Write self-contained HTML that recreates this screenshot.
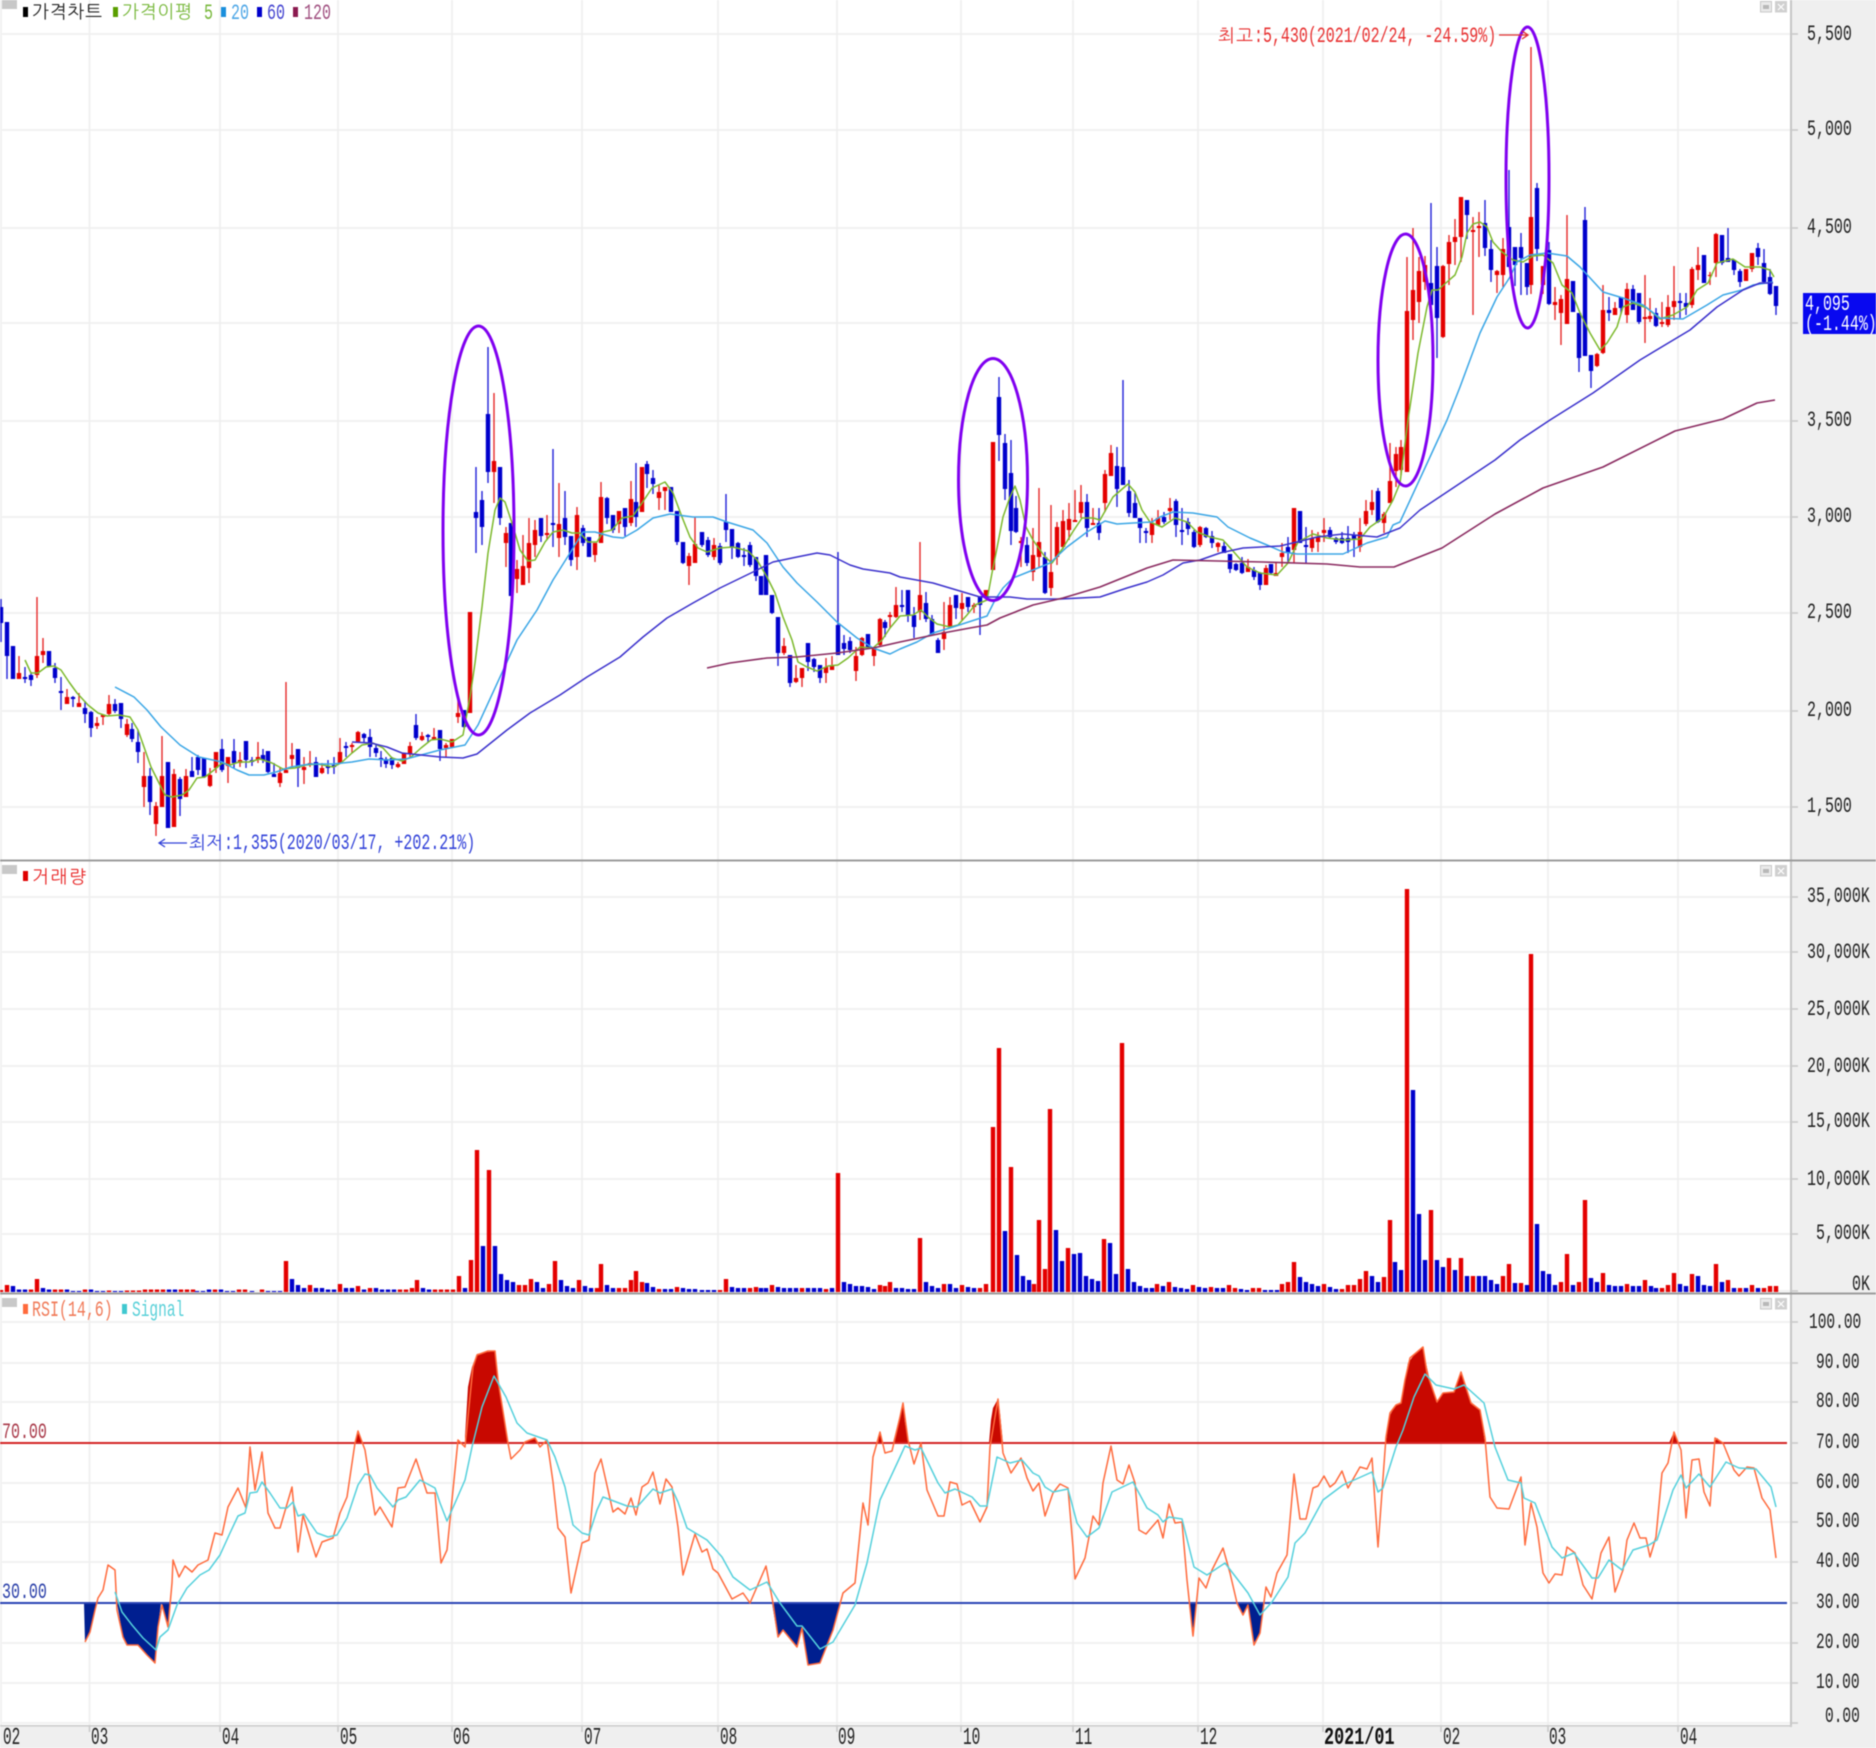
<!DOCTYPE html>
<html lang="ko"><head><meta charset="utf-8"><title>차트</title>
<style>
html,body{margin:0;padding:0;background:#fff;width:1876px;height:1748px;overflow:hidden}
svg{display:block;filter:blur(.45px)}
.ax{font-family:"Liberation Mono",monospace;font-size:22px;fill:#222}
.ko{font-family:"NanumGothic","Noto Sans CJK KR","Liberation Sans",sans-serif;font-size:18px}
.t{font-family:"Liberation Mono",monospace;font-size:24px;fill:#222}
.ln{fill:none;stroke-linejoin:round}
</style></head><body>
<svg width="1876" height="1748" viewBox="0 0 1876 1748" xmlns="http://www.w3.org/2000/svg">
<rect width="1876" height="1748" fill="#fff"/>
<rect x="1792" y="0" width="84" height="1748" fill="#efefef"/>
<rect x="0" y="1725" width="1792" height="23" fill="#efefef"/>
<!-- grid -->
<path fill="none" stroke="#eeeeee" stroke-width="1.5" d="M2 34H1790M2 130H1790M2 228H1790M2 323H1790M2 421H1790M2 517H1790M2 613H1790M2 711H1790M2 807H1790M2 897H1790M2 952H1790M2 1009H1790M2 1066H1790M2 1122H1790M2 1179H1790M2 1234H1790M2 1291H1790M2 1322H1790M2 1363H1790M2 1402H1790M2 1483H1790M2 1522H1790M2 1562H1790M2 1643H1790M2 1683H1790M2 1723H1790M89.5 0V1725M220 0V1725M338 0V1725M452 0V1725M582 0V1725M718 0V1725M837 0V1725M961 0V1725M1073 0V1725M1198 0V1725M1323 0V1725M1441 0V1725M1548 0V1725M1678 0V1725M1 0V1725"/>
<path fill="none" stroke="#c8c8c8" stroke-width="1.5" d="M1792 34h6M1792 130h6M1792 228h6M1792 323h6M1792 421h6M1792 517h6M1792 613h6M1792 711h6M1792 807h6M1792 897h6M1792 952h6M1792 1009h6M1792 1066h6M1792 1122h6M1792 1179h6M1792 1234h6M1792 1291h6M1792 1322h6M1792 1363h6M1792 1402h6M1792 1443h6M1792 1483h6M1792 1522h6M1792 1562h6M1792 1603h6M1792 1643h6M1792 1683h6M1792 1723h6M89.5 1725v7M220 1725v7M338 1725v7M452 1725v7M582 1725v7M718 1725v7M837 1725v7M961 1725v7M1073 1725v7M1198 1725v7M1323 1725v7M1441 1725v7M1548 1725v7M1678 1725v7"/>
<rect x="1790" y="0" width="2" height="1727" fill="#c6c6c6"/>
<rect x="0" y="1725" width="1792" height="1.6" fill="#cccccc"/>

<!-- red wicks -->
<path fill="none" stroke="#e62a2a" stroke-width="1.4" d="M19 656V679M37 597V678M43 638V663M67 689V704M79 693V707M97 717V729M103 715V725M109 695V715M127 719V737M144 752V807M156 802V836M162 736V807M174 769V827M186 769V797M210 768V787M216 752V773M228 757V783M240 752V767M258 742V763M280 768V787M286 682V773M292 743V768M304 757V784M310 751V767M322 763V774M340 738V764M352 743V753M358 731V743M398 762V768M404 753V764M410 742V757M422 732V741M434 728V740M446 743V758M452 739V748M458 700V723M470 612V713M494 393V503M506 527V567M517 560V593M523 535V585M529 518V583M535 520V557M547 515V540M559 483V557M577 507V570M595 543V562M601 482V543M619 511V533M631 481V526M642 467V512M659 485V510M665 487V510M689 553V585M695 517V563M714 538V560M784 638V655M796 665V683M802 668V687M826 658V683M832 656V670M856 647V681M862 637V656M874 647V666M880 618V647M890 612V628M896 587V618M920 542V620M944 602V650M950 597V628M962 593V620M974 603V613M986 590V598M993 442V570M1021 537V567M1033 528V581M1039 488V568M1051 505V596M1057 522V565M1063 510V549M1069 503V540M1075 490V522M1081 485V518M1093 508V525M1105 470V512M1111 445V476M1152 518V543M1158 510V525M1170 498V520M1200 526V547M1218 542V552M1248 559V572M1266 565V585M1276 563V576M1282 543V567M1294 508V563M1312 530V552M1318 532V552M1324 518V542M1360 518V552M1366 500V526M1372 490V515M1384 512V533M1390 443V503M1396 447V487M1401 440V475M1407 257V472M1413 228V340M1419 257V323M1425 256V290M1443 265V338M1449 235V285M1455 219V265M1461 197V262M1473 217V315M1479 212V257M1497 270V293M1503 238V287M1531 47V294M1543 266V294M1555 287V320M1561 295V345M1567 215V324M1597 353V367M1603 285V354M1615 302V315M1627 283V323M1645 275V343M1650 298V322M1662 302V327M1668 295V327M1674 266V320M1692 267V308M1698 247V280M1710 272V285M1716 233V277M1746 269V281M1752 253V272"/>
<!-- red bodies -->
<path fill="none" stroke="#e40000" stroke-width="4.4" d="M19 673V679M37 656V675M43 651V655M67 697V704M79 703V707M97 723V726M103 715V717M109 704V714M127 724V735M144 776V787M156 806V824M162 776V807M174 774V827M186 776V797M210 775V786M216 752V768M228 757V766M240 760V763M258 757V760M280 773V783M286 770V773M292 755V759M304 767V770M310 763V765M322 768V773M340 752V763M352 745V747M358 732V742M398 764V767M404 753V764M410 746V754M422 736V740M434 737V739M446 745V748M452 739V747M458 713V717M470 612V713M494 461V472M506 533V543M517 569V579M523 566V585M529 543V568M535 530V545M547 533V535M559 524V538M577 515V557M595 543V555M601 497V543M619 511V524M631 499V523M642 467V512M659 492V498M665 487V491M689 556V566M695 544V563M714 545V557M784 646V653M796 678V682M802 668V678M826 667V673M832 665V670M856 656V671M862 638V655M874 648V656M880 619V645M890 615V617M896 605V617M920 595V612M944 632V639M950 605V627M962 603V609M974 605V607M986 590V598M993 442V570M1021 541V543M1033 555V572M1039 542V557M1051 572V588M1057 527V557M1063 521V547M1069 519V530M1075 520V522M1081 502V513M1093 523V525M1105 474V503M1111 453V476M1152 523V535M1158 518V525M1170 508V511M1200 527V545M1218 543V547M1248 567V572M1266 568V585M1276 573V576M1282 553V557M1294 508V550M1312 538V548M1318 537V542M1324 530V533M1360 532V547M1366 511V524M1372 502V510M1384 514V523M1390 481V503M1396 454V471M1401 447V470M1407 311V472M1413 290V320M1419 271V302M1425 265V282M1443 266V337M1449 242V264M1455 237V242M1461 197V237M1473 230V232M1479 226V228M1497 271V275M1503 249V275M1531 217V285M1543 266V285M1555 302V305M1561 299V313M1567 279V324M1597 354V366M1603 310V353M1615 308V315M1627 289V315M1645 317V319M1650 316V319M1662 322V324M1668 307V325M1674 301V307M1692 269V305M1698 265V270M1710 275V276M1716 234V263M1746 269V281M1752 253V269"/>
<!-- blue wicks -->
<path fill="none" stroke="#2020d8" stroke-width="1.4" d="M1 599V642M7 622V679M13 646V679M25 667V683M31 672V686M49 651V667M55 663V683M61 677V710M73 696V707M85 701V723M91 711V737M115 699V713M121 703V728M132 723V742M138 730V763M150 768V815M168 762V828M180 777V816M192 757V777M198 755V775M204 758V778M222 739V772M234 739V768M246 741V768M252 757V766M263 749V763M268 751V773M274 763V777M298 749V787M316 757V777M328 760V774M334 757V774M346 742V757M364 733V743M370 729V757M376 745V757M381 751V767M386 757V768M392 757V769M416 714V740M428 734V742M440 730V761M464 710V728M476 467V553M482 491V545M488 347V483M500 467V525M511 523V596M541 518V542M553 449V547M565 491V545M571 536V566M583 525V546M589 537V557M607 497V524M613 515V533M625 508V536M636 463V527M647 461V488M653 470V494M671 487V512M677 511V545M683 542V564M702 532V547M708 537V557M720 543V565M726 494V542M732 529V559M738 542V558M744 548V566M750 542V567M756 557V581M761 576V595M766 555V595M772 595V614M778 617V666M790 655V687M808 643V671M814 658V672M820 665V683M838 552V655M844 635V655M850 637V653M868 634V648M885 620V637M902 590V612M908 590V622M914 607V638M926 592V622M932 615V635M938 638V653M956 595V619M968 597V612M980 596V635M999 377V461M1005 434V500M1011 440V545M1016 496V533M1027 537V566M1045 552V594M1087 494V537M1099 508V540M1117 447V507M1123 380V485M1129 480V517M1135 493V518M1140 518V543M1146 528V543M1164 512V524M1176 499V537M1182 508V545M1188 518V535M1194 530V548M1206 527V538M1212 531V548M1224 542V553M1230 554V573M1236 563V571M1242 557V574M1254 567V580M1260 572V590M1271 564V575M1288 537V563M1300 511V543M1306 527V563M1330 527V538M1336 537V544M1342 532V544M1348 526V553M1354 532V557M1378 488V523M1431 203V305M1437 247V358M1467 200V239M1485 200V256M1491 240V282M1509 170V267M1515 247V286M1521 233V295M1527 263V295M1537 183V261M1549 242V305M1573 281V312M1579 313V372M1585 207V356M1591 355V388M1609 297V321M1621 297V314M1633 285V310M1639 293V324M1656 308V327M1680 293V318M1686 293V315M1704 255V283M1722 235V265M1728 228V262M1734 260V275M1740 269V287M1758 243V265M1764 249V283M1770 269V295M1776 286V315"/>
<!-- blue bodies -->
<path fill="none" stroke="#0000cc" stroke-width="4.4" d="M1 607V623M7 622V656M13 646V679M25 677V679M31 675V680M49 651V666M55 668V678M61 691V693M73 697V699M85 708V714M91 712V728M115 704V711M121 703V719M132 729V739M138 742V752M150 776V802M168 762V828M180 779V799M192 771V777M198 757V770M204 758V777M222 749V770M234 751V763M246 741V760M252 760V762M263 755V760M268 751V772M274 774V777M298 749V768M316 762V777M328 766V768M334 765V767M346 746V748M364 734V738M370 737V747M376 748V753M381 758V760M386 759V764M392 758V765M416 725V738M428 735V737M440 730V749M464 710V727M476 512V518M482 500V527M488 414V472M500 467V518M511 523V596M541 518V536M553 523V525M565 518V537M571 536V560M583 528V543M589 537V557M607 498V518M613 515V530M625 508V527M636 502V517M647 464V474M653 478V484M671 487V512M677 511V542M683 542V563M702 532V545M708 540V555M720 546V563M726 522V530M732 529V548M738 543V557M744 555V557M750 545V565M756 557V576M761 576V595M766 555V595M772 595V613M778 617V653M790 655V683M808 643V662M814 659V667M820 665V678M838 625V655M844 643V649M850 641V650M868 634V648M885 622V628M902 605V607M908 590V615M914 615V627M926 603V619M932 619V634M938 640V653M956 595V608M968 597V607M980 596V605M999 397V435M1005 443V489M1011 473V531M1016 508V532M1027 545V563M1045 557V593M1087 502V528M1099 523V533M1117 466V489M1123 467V485M1129 491V513M1135 503V518M1140 518V528M1146 531V533M1164 517V522M1176 501V525M1182 530V532M1188 522V529M1194 532V547M1206 528V537M1212 536V543M1224 546V553M1230 554V569M1236 564V570M1242 563V573M1254 570V577M1260 573V585M1271 564V573M1288 547V553M1300 511V543M1306 545V547M1330 530V537M1336 538V542M1342 538V543M1348 538V542M1354 535V540M1378 491V522M1431 283V305M1437 266V318M1467 200V215M1485 223V248M1491 249V270M1509 227V267M1515 247V265M1521 247V258M1527 263V287M1537 188V249M1549 250V304M1573 281V312M1579 313V358M1585 220V356M1591 355V371M1609 310V313M1621 297V308M1633 289V310M1639 293V322M1656 313V326M1680 301V303M1686 303V307M1704 255V283M1722 235V263M1728 258V262M1734 260V270M1740 271V282M1758 248V257M1764 263V282M1770 277V294M1776 286V306"/>

<!-- moving averages -->
<polyline class="ln" stroke="#7cb92c" stroke-width="1.5" points="25,660 31,673 38,673 46,667 54,666 61,670 69,682 77,693 88,705 98,713 107,716 119,715 130,717 138,730 144,747 151,767 159,783 165,795 172,797 182,795 189,790 197,778 205,777 214,770 222,763 230,765 239,762 249,762 260,759 272,763 283,769 295,768 306,765 318,764 333,767 341,763 352,753 362,745 373,743 383,748 392,758 402,761 411,757 421,748 431,740 440,739 452,742 463,735 470,697 475,663 482,607 488,553 495,510 500,498 505,502 512,523 520,550 528,561 535,560 545,542 553,532 563,530 572,533 580,533 588,542 597,542 603,532 612,530 622,518 633,516 642,503 652,488 665,482 673,493 682,517 690,537 698,548 707,552 720,548 733,547 748,551 757,560 767,577 775,593 783,617 792,640 798,662 807,667 817,671 828,666 838,665 848,658 860,647 873,648 882,640 890,628 900,616 913,615 921,610 928,617 937,624 950,627 958,625 967,615 975,605 987,600 992,573 997,548 1003,517 1010,497 1015,486 1020,500 1026,527 1033,540 1045,557 1052,563 1063,548 1072,533 1082,518 1093,518 1100,520 1113,497 1128,484 1135,492 1142,510 1150,522 1162,527 1175,518 1187,522 1197,532 1210,537 1223,540 1233,551 1247,567 1260,573 1277,575 1288,563 1298,542 1313,534 1327,538 1343,540 1360,539 1370,527 1383,518 1393,500 1400,483 1408,420 1418,353 1427,307 1432,290 1438,290 1447,282 1455,275 1462,257 1467,233 1473,224 1480,222 1487,227 1493,242 1502,252 1513,260 1523,262 1533,256 1543,255 1553,263 1562,285 1572,293 1580,313 1590,333 1600,350 1607,343 1617,327 1623,307 1633,303 1647,308 1660,319 1673,315 1687,307 1697,290 1708,283 1717,263 1733,259 1745,267 1760,267 1770,270 1774,277"/>
<polyline class="ln" stroke="#3aa6e6" stroke-width="1.5" points="115,687 134,697 147,710 161,727 180,745 199,757 222,762 237,770 249,775 264,775 276,772 291,767 310,764 333,764 352,762 369,759 387,760 406,759 421,755 440,750 465,745 478,725 500,677 517,640 537,610 553,580 570,553 583,532 595,532 613,537 623,538 637,530 653,518 670,514 693,517 713,517 727,522 753,530 767,543 783,567 797,583 817,602 837,622 857,638 873,648 890,654 900,649 917,642 933,633 953,627 987,616 995,600 1003,588 1013,578 1033,570 1050,563 1067,547 1087,532 1105,521 1117,524 1133,523 1152,522 1160,517 1173,512 1193,513 1217,517 1228,527 1250,538 1267,545 1283,552 1297,554 1343,554 1367,543 1387,537 1393,525 1400,522 1424,470 1447,420 1460,387 1480,333 1497,297 1510,277 1517,262 1530,255 1547,253 1567,256 1580,267 1603,292 1623,298 1643,305 1660,318 1683,319 1707,305 1723,295 1742,290 1753,285 1773,282"/>
<polyline class="ln" stroke="#3a30cc" stroke-width="1.5" points="352,742 371,743 387,747 402,753 421,755 440,757 463,758 477,754 507,730 530,713 560,695 587,677 620,657 643,637 667,618 693,603 720,588 753,572 773,562 797,557 817,553 830,555 850,565 863,569 890,573 900,577 933,583 980,597 1010,597 1027,599 1060,599 1100,597 1127,588 1147,582 1163,575 1183,563 1200,560 1220,553 1243,548 1280,546 1297,542 1317,537 1343,534 1377,537 1400,528 1420,510 1450,490 1495,460 1520,440 1550,420 1593,393 1640,360 1690,330 1717,307 1743,290 1760,283 1773,283"/>
<polyline class="ln" stroke="#8a2a60" stroke-width="1.6" points="707,668 730,663 767,658 797,657 837,653 873,648 900,642 943,633 970,628 987,625 1000,618 1033,605 1063,598 1100,587 1147,568 1173,560 1263,562 1327,564 1360,567 1394,567 1442,548 1495,514 1543,488 1603,467 1675,431 1723,419 1757,403 1775,400"/>

<!-- ovals -->
<g fill="none" stroke="#8000f0" stroke-width="3">
<ellipse cx="478.5" cy="530.5" rx="35.5" ry="204.5"/>
<ellipse cx="993" cy="479.5" rx="34.5" ry="121"/>
<ellipse cx="1405.5" cy="360" rx="27.5" ry="126"/>
<ellipse cx="1527.5" cy="177.5" rx="21.5" ry="150.5"/>
</g>

<!-- volume red -->
<path fill="none" stroke="#e40000" stroke-width="4.4" d="M1 1292v-2M7 1292v-7M31 1292v-2.5M37 1292v-13M55 1292v-2.5M61 1292v-2.5M85 1292v-2.5M109 1292v-1.5M127 1292v-1.5M133 1292v-1.5M139 1292v-1.5M145 1292v-2.5M151 1292v-2.5M157 1292v-2.5M163 1292v-2.5M181 1292v-2.5M187 1292v-2.5M193 1292v-2.5M215 1292v-2.5M239 1292v-2.5M245 1292v-2.5M262 1292v-2.5M286 1292v-31M310 1292v-7M340 1292v-8M358 1292v-6M370 1292v-4M400 1292v-2.5M406 1292v-2.5M412 1292v-4M417 1292v-12M435 1292v-2.5M441 1292v-2.5M447 1292v-2.5M453 1292v-2.5M459 1292v-16M471 1292v-32M477 1292v-142M489 1292v-122M519 1292v-7M525 1292v-7M531 1292v-13M549 1292v-8M555 1292v-31M579 1292v-12M597 1292v-4M601 1292v-28M619 1292v-4M625 1292v-4M631 1292v-12M636 1292v-21M642 1292v-10M659 1292v-3M677 1292v-5M720 1292v-2M726 1292v-13M750 1292v-4M756 1292v-5M772 1292v-7M802 1292v-4M826 1292v-3M838 1292v-119M880 1292v-7M885 1292v-6M890 1292v-10M920 1292v-54M944 1292v-8M962 1292v-7M980 1292v-4M986 1292v-8M993 1292v-165M999 1292v-244M1011 1292v-125M1034 1292v-8M1039 1292v-72M1045 1292v-23M1050 1292v-183M1068 1292v-44M1104 1292v-53M1122 1292v-249M1157 1292v-8M1169 1292v-10M1193 1292v-7M1211 1292v-5M1229 1292v-7M1235 1292v-4M1253 1292v-4M1259 1292v-4M1282 1292v-8M1288 1292v-10M1294 1292v-30M1324 1292v-8M1342 1292v-3M1348 1292v-7M1354 1292v-7M1360 1292v-13M1366 1292v-21M1384 1292v-15M1390 1292v-72M1407 1292v-403M1431 1292v-82M1449 1292v-34M1461 1292v-34M1473 1292v-16M1503 1292v-16M1509 1292v-28M1521 1292v-9M1531 1292v-338M1561 1292v-10M1567 1292v-38M1579 1292v-10M1585 1292v-92M1603 1292v-19M1627 1292v-8M1645 1292v-12M1662 1292v-4M1668 1292v-7M1674 1292v-19M1692 1292v-18M1716 1292v-28M1728 1292v-12M1740 1292v-4M1752 1292v-7M1764 1292v-4M1770 1292v-6M1776 1292v-6"/>
<!-- volume blue -->
<path fill="none" stroke="#0000cc" stroke-width="4.4" d="M13 1292v-6M19 1292v-2.5M25 1292v-2.5M43 1292v-4M49 1292v-2.5M67 1292v-2.5M73 1292v-1M79 1292v-1M91 1292v-2.5M97 1292v-1M103 1292v-1M115 1292v-1M121 1292v-1M169 1292v-2.5M175 1292v-2.5M197 1292v-1M203 1292v-1M209 1292v-2.5M221 1292v-2.5M227 1292v-1M233 1292v-1M252 1292v-1M268 1292v-1M274 1292v-1M280 1292v-1M292 1292v-13M298 1292v-7M304 1292v-4M316 1292v-4M322 1292v-4M328 1292v-2.5M334 1292v-2.5M346 1292v-4M352 1292v-4M364 1292v-2.5M376 1292v-4M382 1292v-2.5M388 1292v-2.5M394 1292v-2.5M423 1292v-4M429 1292v-2.5M465 1292v-4M483 1292v-46M495 1292v-46M501 1292v-18M507 1292v-12M513 1292v-10M537 1292v-10M543 1292v-4M561 1292v-12M567 1292v-6M573 1292v-4M585 1292v-6M591 1292v-4M607 1292v-7M613 1292v-4M647 1292v-9M653 1292v-5M665 1292v-3M671 1292v-3M683 1292v-4M689 1292v-3M695 1292v-3M702 1292v-2M708 1292v-2M714 1292v-2M732 1292v-5M738 1292v-4M744 1292v-4M761 1292v-4M766 1292v-4M778 1292v-5M784 1292v-4M790 1292v-4M796 1292v-4M808 1292v-4M814 1292v-4M820 1292v-4M832 1292v-4M844 1292v-10M850 1292v-8M856 1292v-6M862 1292v-6M868 1292v-5M874 1292v-3M896 1292v-4M902 1292v-4M908 1292v-3M914 1292v-3M926 1292v-10M932 1292v-6M938 1292v-4M950 1292v-8M956 1292v-4M968 1292v-5M974 1292v-4M1005 1292v-61M1017 1292v-37M1023 1292v-16M1029 1292v-12M1056 1292v-62M1062 1292v-31M1074 1292v-38M1080 1292v-39M1086 1292v-16M1092 1292v-13M1098 1292v-11M1110 1292v-49M1116 1292v-18M1128 1292v-23M1134 1292v-10M1140 1292v-6M1146 1292v-4M1152 1292v-4M1163 1292v-6M1175 1292v-5M1181 1292v-4M1187 1292v-3M1199 1292v-5M1205 1292v-4M1217 1292v-4M1223 1292v-4M1241 1292v-3M1247 1292v-2M1265 1292v-2M1271 1292v-2M1277 1292v-2M1300 1292v-15M1306 1292v-10M1312 1292v-8M1318 1292v-6M1330 1292v-5M1336 1292v-3M1372 1292v-16M1378 1292v-10M1395 1292v-30M1401 1292v-22M1413 1292v-202M1419 1292v-78M1425 1292v-32M1437 1292v-32M1443 1292v-25M1455 1292v-22M1467 1292v-16M1479 1292v-16M1485 1292v-16M1491 1292v-12M1497 1292v-8M1515 1292v-9M1527 1292v-7M1537 1292v-68M1543 1292v-21M1549 1292v-18M1555 1292v-7M1573 1292v-7M1591 1292v-14M1597 1292v-10M1609 1292v-7M1615 1292v-6M1621 1292v-6M1633 1292v-6M1639 1292v-6M1651 1292v-6M1656 1292v-4M1680 1292v-8M1686 1292v-6M1698 1292v-16M1704 1292v-7M1710 1292v-6M1722 1292v-10M1734 1292v-4M1746 1292v-4M1758 1292v-4"/>

<!-- RSI fills -->
<g fill="#c80800">
<polygon points="465,1443 465,1437 468,1387 472,1367 477,1354 487,1352 495,1351 497,1370 503,1413 508,1443"/>
<polygon points="525,1443 525,1442 535,1438 537,1443"/>
<polygon points="355,1443 358,1431 363,1443"/>
<polygon points="878,1443 880,1432 883,1443"/>
<polygon points="893,1443 897,1427 900,1415 903,1403 905,1423 909,1443"/>
<polygon points="989,1443 991,1420 993,1408 998,1399 1000,1413 1003,1443"/>
<polygon points="1386,1443 1389,1417 1395,1406 1401,1403 1405,1380 1408,1363 1414,1355 1423,1347 1426,1363 1429,1377 1437,1402 1443,1393 1454,1392 1461,1372 1471,1402 1480,1410 1485,1443"/>
<polygon points="1669,1443 1674,1432 1679,1443"/>
<polygon points="1714,1443 1717,1438 1723,1443"/>
</g>
<g fill="#001f90">
<polygon points="84,1603 85,1642 90,1632 95,1610 97,1603"/>
<polygon points="117,1603 123,1637 127,1645 138,1645 147,1655 155,1663 158,1627 161,1603"/>
<polygon points="161,1603 168,1627 170,1603"/>
<polygon points="772,1603 777,1633 778,1637 783,1630 797,1647 802,1628 808,1665 820,1663 833,1630 841,1603"/>
<polygon points="1189,1603 1193,1630 1197,1603"/>
<polygon points="1237,1603 1243,1615 1248,1605 1254,1643 1260,1633 1264,1603"/>
</g>
<rect x="0" y="1442" width="1787" height="2" fill="#d42424"/>
<rect x="0" y="1602" width="1787" height="2" fill="#2a44b4"/>
<!-- RSI -->
<polyline class="ln" stroke="#ff6a3c" stroke-width="1.5" points="85,1642 90,1632 95,1610 98,1598 103,1590 108,1565 115,1570 117,1610 123,1637 127,1645 138,1645 147,1655 155,1663 158,1627 162,1605 167,1623 168,1627 172,1583 173,1560 179,1577 185,1566 192,1572 198,1565 208,1560 215,1533 222,1535 228,1507 238,1488 246,1508 250,1447 255,1490 262,1452 268,1513 275,1528 280,1528 292,1487 298,1552 303,1515 316,1557 322,1542 333,1538 340,1513 347,1497 355,1443 358,1431 365,1450 375,1515 380,1507 392,1527 398,1488 405,1487 416,1459 427,1493 435,1493 441,1563 447,1550 458,1440 465,1447 473,1367 477,1355 488,1351 495,1351 498,1380 508,1443 511,1459 520,1450 525,1442 535,1438 540,1447 547,1440 553,1482 558,1528 565,1537 571,1593 582,1543 589,1540 595,1473 601,1459 613,1512 618,1508 625,1514 631,1498 636,1515 642,1487 648,1483 653,1472 660,1504 666,1479 672,1487 678,1527 683,1575 695,1534 702,1552 707,1549 713,1569 718,1573 732,1599 743,1593 750,1603 766,1566 773,1603 778,1637 783,1630 797,1647 802,1628 808,1665 820,1663 833,1630 843,1593 855,1583 860,1533 863,1503 868,1525 873,1457 880,1432 885,1453 892,1451 900,1417 903,1403 908,1440 914,1464 921,1443 927,1490 938,1516 944,1516 950,1482 957,1484 962,1505 970,1501 980,1522 987,1507 990,1447 998,1399 1003,1453 1011,1473 1021,1458 1027,1478 1033,1491 1039,1483 1045,1516 1053,1493 1060,1484 1068,1488 1073,1547 1075,1579 1085,1558 1093,1516 1099,1525 1103,1483 1111,1446 1117,1480 1123,1484 1129,1465 1135,1483 1139,1530 1146,1534 1158,1520 1163,1538 1169,1504 1175,1523 1182,1522 1187,1580 1193,1636 1199,1578 1206,1588 1212,1570 1223,1548 1230,1573 1237,1603 1243,1615 1248,1605 1254,1645 1260,1633 1266,1587 1271,1597 1277,1573 1287,1555 1294,1474 1300,1519 1306,1519 1313,1488 1318,1486 1324,1476 1330,1487 1335,1483 1342,1471 1348,1488 1360,1467 1367,1469 1372,1458 1378,1547 1386,1437 1390,1413 1396,1405 1401,1403 1405,1380 1410,1358 1423,1347 1427,1373 1437,1402 1443,1393 1454,1392 1461,1372 1471,1403 1480,1410 1485,1438 1490,1497 1497,1508 1509,1509 1521,1477 1525,1545 1531,1503 1537,1527 1543,1573 1549,1583 1555,1574 1562,1575 1567,1547 1575,1553 1583,1585 1592,1599 1601,1553 1609,1537 1615,1592 1623,1570 1627,1540 1634,1523 1640,1538 1646,1538 1650,1557 1656,1537 1662,1473 1668,1463 1674,1432 1681,1450 1686,1518 1692,1460 1699,1459 1704,1492 1710,1506 1715,1438 1723,1443 1734,1470 1739,1476 1747,1467 1754,1468 1762,1498 1770,1510 1776,1558"/>
<!-- Signal -->
<polyline class="ln" stroke="#54d0dc" stroke-width="1.5" points="115,1592 122,1612 132,1625 143,1638 156,1650 160,1637 168,1630 177,1605 187,1588 200,1575 209,1570 220,1555 230,1533 238,1516 245,1513 250,1493 257,1492 262,1482 270,1493 280,1508 287,1508 293,1502 298,1516 304,1514 317,1533 328,1537 337,1535 347,1518 358,1485 365,1474 370,1475 377,1488 393,1507 398,1500 406,1497 420,1480 435,1488 440,1503 447,1521 455,1503 465,1480 472,1447 482,1407 494,1376 506,1397 517,1423 527,1433 547,1440 555,1457 565,1487 573,1525 582,1533 589,1535 597,1510 603,1497 627,1506 637,1507 653,1489 660,1493 672,1489 678,1502 687,1528 707,1540 722,1557 733,1577 750,1590 767,1582 780,1603 797,1626 802,1626 820,1649 833,1642 855,1605 867,1563 880,1500 900,1457 905,1446 915,1450 921,1448 938,1483 945,1493 955,1489 972,1497 980,1506 987,1506 997,1457 1010,1463 1022,1460 1033,1473 1039,1476 1045,1487 1053,1492 1068,1489 1077,1523 1087,1537 1099,1528 1112,1492 1133,1482 1147,1508 1158,1515 1163,1522 1169,1517 1182,1519 1194,1567 1207,1575 1225,1563 1248,1593 1260,1615 1272,1602 1288,1577 1295,1543 1305,1533 1323,1500 1343,1485 1372,1472 1378,1492 1383,1488 1396,1447 1403,1430 1414,1397 1425,1374 1436,1385 1454,1389 1464,1385 1484,1403 1495,1447 1508,1480 1521,1483 1524,1498 1535,1503 1552,1547 1562,1558 1574,1553 1592,1578 1598,1578 1609,1560 1622,1570 1633,1550 1649,1545 1657,1540 1673,1490 1681,1475 1686,1488 1699,1474 1710,1487 1726,1462 1739,1468 1756,1469 1771,1487 1776,1507"/>

<!-- dividers -->
<rect x="0" y="859.5" width="1876" height="2" fill="#9c9c9c"/>
<rect x="0" y="1292.5" width="1876" height="2" fill="#9c9c9c"/>

<!-- legends -->
<g fill="#c8c8c8"><rect x="2" y="0" width="15" height="9"/><rect x="2" y="865" width="15" height="9"/><rect x="2" y="1298" width="15" height="9"/></g>
<rect x="23" y="7" width="5" height="10" fill="#000"/>
<text class="ko" x="32" y="18" fill="#222" textLength="70">가격차트</text>
<rect x="113" y="7" width="5" height="10" fill="#5a9e00"/>
<text class="ko" x="122" y="18" fill="#78b83c" textLength="70">가격이평</text>
<text class="ax" transform="translate(204 19) scale(.68 1)" style="fill:#78b83c">5</text>
<rect x="221" y="7" width="5" height="10" fill="#1a8fdc"/>
<text class="ax" transform="translate(231 19) scale(.68 1)" style="fill:#4da6e6">20</text>
<rect x="257" y="7" width="5" height="10" fill="#0000cc"/>
<text class="ax" transform="translate(267 19) scale(.68 1)" style="fill:#4444d0">60</text>
<rect x="293" y="7" width="5" height="10" fill="#8b1a50"/>
<text class="ax" transform="translate(304 19) scale(.68 1)" style="fill:#a05080">120</text>

<rect x="23" y="871" width="5" height="10" fill="#e00000"/>
<text class="ko" x="32" y="883" fill="#e82828" textLength="54">거래량</text>

<rect x="23" y="1304" width="5" height="10" fill="#ff6a3c"/>
<text class="ax" transform="translate(32 1316) scale(.68 1)" style="fill:#f07a58">RSI(14,6)</text>
<rect x="122" y="1304" width="5" height="10" fill="#40c8d0"/>
<text class="ax" transform="translate(132 1316) scale(.66 1)" style="fill:#58d0d8">Signal</text>

<text class="ax" transform="translate(2 1438) scale(.68 1)" style="fill:#a83848">70.00</text>
<text class="ax" transform="translate(2 1598) scale(.68 1)" style="fill:#2a3fa8">30.00</text>

<!-- annotations -->
<text class="ko" x="1218" y="42" fill="#e83030" textLength="35">최고</text>
<text class="ax" transform="translate(1254 42) scale(.68 1)" style="fill:#e83030">:5,430(2021/02/24, -24.59%)</text>
<path d="M1499 35H1528M1522 31l6 4l-6 4" fill="none" stroke="#e03030" stroke-width="1.3"/>
<text class="ko" x="189" y="849" fill="#3040d8" textLength="34">최저</text>
<text class="ax" transform="translate(224 849) scale(.68 1)" style="fill:#3040d8">:1,355(2020/03/17, +202.21%)</text>
<path d="M159 843H187M165 839l-6 4l6 4" fill="none" stroke="#3040d8" stroke-width="1.3"/>

<!-- price axis -->
<g class="ax">
<text class="ax" transform="translate(1807 40) scale(.68 1)">5,500</text>
<text class="ax" transform="translate(1807 135) scale(.68 1)">5,000</text>
<text class="ax" transform="translate(1807 233) scale(.68 1)">4,500</text>
<text class="ax" transform="translate(1807 426) scale(.68 1)">3,500</text>
<text class="ax" transform="translate(1807 522) scale(.68 1)">3,000</text>
<text class="ax" transform="translate(1807 618) scale(.68 1)">2,500</text>
<text class="ax" transform="translate(1807 716) scale(.68 1)">2,000</text>
<text class="ax" transform="translate(1807 812) scale(.68 1)">1,500</text>
<text class="ax" transform="translate(1807 902) scale(.68 1)">35,000K</text>
<text class="ax" transform="translate(1807 958) scale(.68 1)">30,000K</text>
<text class="ax" transform="translate(1807 1015) scale(.68 1)">25,000K</text>
<text class="ax" transform="translate(1807 1072) scale(.68 1)">20,000K</text>
<text class="ax" transform="translate(1807 1127) scale(.68 1)">15,000K</text>
<text class="ax" transform="translate(1807 1185) scale(.68 1)">10,000K</text>
<text class="ax" transform="translate(1816 1239) scale(.68 1)">5,000K</text>
<text class="ax" transform="translate(1852 1290) scale(.68 1)">0K</text>
<text class="ax" transform="translate(1809 1328) scale(.66 1)">100.00</text>
<text class="ax" transform="translate(1816 1368) scale(.66 1)">90.00</text>
<text class="ax" transform="translate(1816 1407) scale(.66 1)">80.00</text>
<text class="ax" transform="translate(1816 1448) scale(.66 1)">70.00</text>
<text class="ax" transform="translate(1816 1488) scale(.66 1)">60.00</text>
<text class="ax" transform="translate(1816 1527) scale(.66 1)">50.00</text>
<text class="ax" transform="translate(1816 1567) scale(.66 1)">40.00</text>
<text class="ax" transform="translate(1816 1608) scale(.66 1)">30.00</text>
<text class="ax" transform="translate(1816 1648) scale(.66 1)">20.00</text>
<text class="ax" transform="translate(1816 1688) scale(.66 1)">10.00</text>
<text class="ax" transform="translate(1825 1722) scale(.66 1)">0.00</text>
</g>
<rect x="1803" y="293" width="73" height="41" fill="#0808f0"/>
<text class="ax" transform="translate(1805 310) scale(.68 1)" style="fill:#fff">4,095</text>
<text class="ax" transform="translate(1805 330) scale(.68 1)" style="fill:#fff">(-1.44%)</text>

<!-- time axis -->
<text class="t" transform="translate(3 1744) scale(.6 1)">02</text>
<text class="t" transform="translate(91 1744) scale(.6 1)">03</text>
<text class="t" transform="translate(222 1744) scale(.6 1)">04</text>
<text class="t" transform="translate(340 1744) scale(.6 1)">05</text>
<text class="t" transform="translate(453 1744) scale(.6 1)">06</text>
<text class="t" transform="translate(584 1744) scale(.6 1)">07</text>
<text class="t" transform="translate(720 1744) scale(.6 1)">08</text>
<text class="t" transform="translate(838 1744) scale(.6 1)">09</text>
<text class="t" transform="translate(963 1744) scale(.6 1)">10</text>
<text class="t" transform="translate(1075 1744) scale(.6 1)">11</text>
<text class="t" transform="translate(1200 1744) scale(.6 1)">12</text>
<text class="t" transform="translate(1324 1744) scale(.7 1)" style="font-weight:700;fill:#111">2021/01</text>
<text class="t" transform="translate(1443 1744) scale(.6 1)">02</text>
<text class="t" transform="translate(1549 1744) scale(.6 1)">03</text>
<text class="t" transform="translate(1680 1744) scale(.6 1)">04</text>

<!-- panel buttons -->
<g>
<rect x="1760.5" y="1.5" width="11" height="10.5" fill="#eaeaea" stroke="#c8c8c8"/><rect x="1763" y="5" width="6" height="4" fill="#b8b8b8"/>
<rect x="1775" y="1" width="12" height="11.5" fill="#d0d0d0"/><path d="M1778 4l6 6M1784 4l-6 6" stroke="#fff" stroke-width="1.2"/>
<rect x="1760.5" y="865.5" width="11" height="10.5" fill="#eaeaea" stroke="#c8c8c8"/><rect x="1763" y="869" width="6" height="4" fill="#b8b8b8"/>
<rect x="1775" y="865" width="12" height="11.5" fill="#d0d0d0"/><path d="M1778 868l6 6M1784 868l-6 6" stroke="#fff" stroke-width="1.2"/>
<rect x="1760.5" y="1298.5" width="11" height="10.5" fill="#eaeaea" stroke="#c8c8c8"/><rect x="1763" y="1302" width="6" height="4" fill="#b8b8b8"/>
<rect x="1775" y="1298" width="12" height="11.5" fill="#d0d0d0"/><path d="M1778 1301l6 6M1784 1301l-6 6" stroke="#fff" stroke-width="1.2"/>
</g>
</svg>
</body></html>
